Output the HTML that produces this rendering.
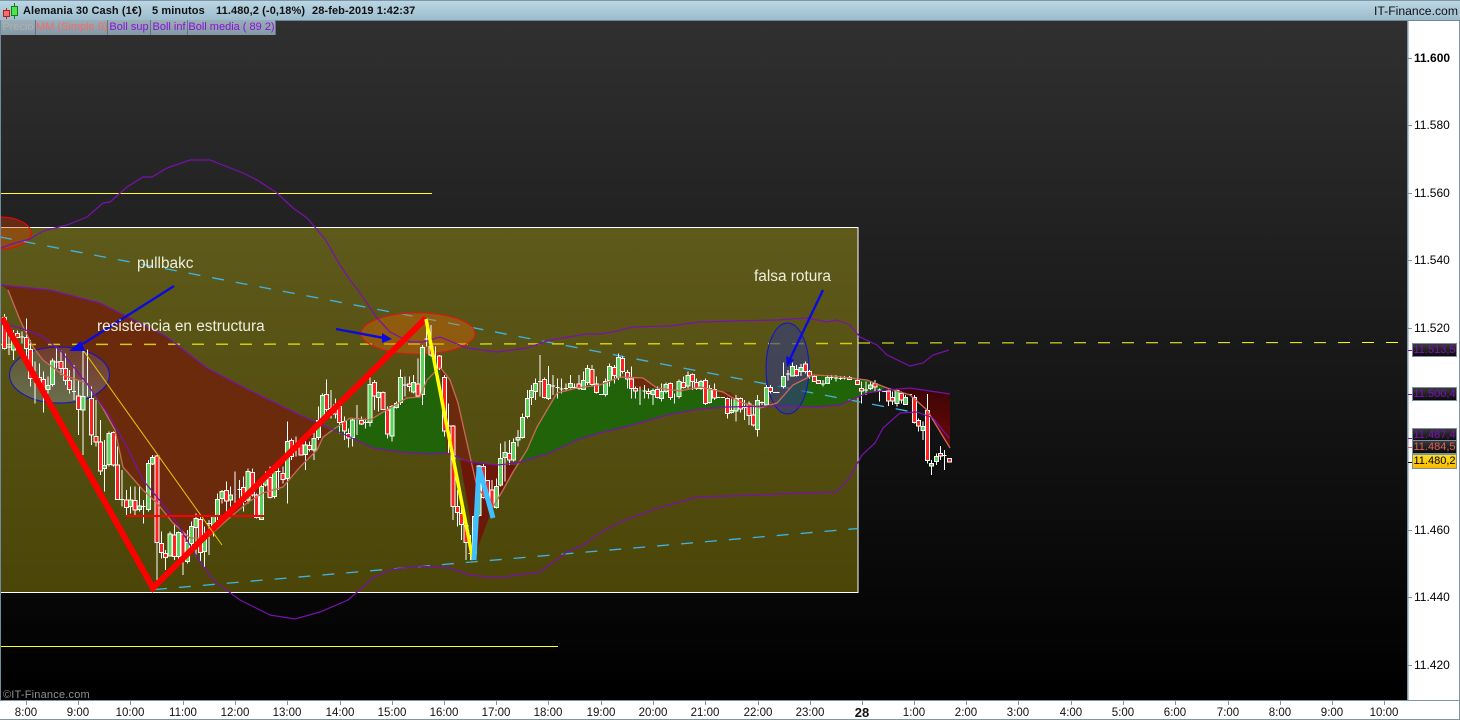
<!DOCTYPE html>
<html><head><meta charset="utf-8"><style>
html,body{margin:0;padding:0;background:#000}
#w{position:relative;width:1460px;height:720px;overflow:hidden;font-family:"Liberation Sans",sans-serif}
svg{position:absolute;left:0;top:0}
.h{position:absolute;top:4px;font-size:11px;font-weight:bold;color:#101010;line-height:14px;white-space:nowrap;letter-spacing:.1px}
.l{position:absolute;top:20px;height:15px;font-size:11px;line-height:15px;background:linear-gradient(#9aaeb9,#8499a5);text-align:center;white-space:nowrap;box-sizing:border-box;border-right:1px solid #5f7582}
.y{position:absolute;left:1414px;font-size:12px;color:#000;line-height:14px}
.x{position:absolute;top:706px;width:50px;text-align:center;font-size:11.5px;color:#111;line-height:14px}
.b{position:absolute;left:1412px;width:45px;height:14px;box-sizing:border-box;border:1px solid #7c919c;background:linear-gradient(#3a3a3a,#0a0a0a);font-size:11px;line-height:13px;text-align:center;color:#7a10c0;white-space:nowrap}
</style></head><body><div id="w">
<svg width="1460" height="720" viewBox="0 0 1460 720" xmlns="http://www.w3.org/2000/svg">
<defs>
<linearGradient id="bg" x1="0" y1="21" x2="0" y2="690" gradientUnits="userSpaceOnUse"><stop offset="0" stop-color="#303030"/><stop offset="1" stop-color="#000"/></linearGradient>
<linearGradient id="ol" x1="0" y1="227" x2="0" y2="592" gradientUnits="userSpaceOnUse"><stop offset="0" stop-color="#5e5a1b"/><stop offset="1" stop-color="#4b4508"/></linearGradient>
<linearGradient id="dr" x1="0" y1="388" x2="0" y2="450" gradientUnits="userSpaceOnUse"><stop offset="0" stop-color="#3a0505"/><stop offset="1" stop-color="#720808"/></linearGradient>
<linearGradient id="el" x1="0" y1="347" x2="0" y2="403" gradientUnits="userSpaceOnUse"><stop offset="0" stop-color="#7a6a7a" stop-opacity=".3"/><stop offset="1" stop-color="#8a9aa8" stop-opacity=".4"/></linearGradient>
</defs>
<rect x="0" y="20" width="1408" height="681" fill="url(#bg)"/>
<path d="M0 193.500H432" stroke="#ffff33" stroke-width="1"/>
<path d="M0 646.500H558" stroke="#ffff20" stroke-width="1"/>
<rect x="0" y="227.500" width="858" height="365" fill="url(#ol)" stroke="#fff" stroke-width="1"/>
<ellipse cx="0" cy="233" rx="31" ry="16" fill="#d23c00" fill-opacity=".38" stroke="#f00" stroke-width="1"/>

<path d="M1 285L50 290 100 303 120 313 167 337 207 368 243 387 300 415 330 430 323 437 317 450 300 468 283 487 263 493 247 503 227 520 207 538 190 538 173 523 157 503 143 490 123 467 115 430 100 403 87 383 63 375 43 360 33 347 20 320 8 290z" fill="#6b2a0b"/>
<path d="M330 430L337 427 350 418 370 420 390 408 407 398 420 397 427 350 440 367 448 423 447 453 427 454 400 452 373 448 350 437z" fill="#206308"/>
<path d="M440 367L450 380 458 403 467 443 471 462 447 453z" fill="#6b2a0b"/>
<path d="M460 460L497 465 517 465 513 472 503 490 493 507 476 552z" fill="#6d1708"/>
<path d="M513 472L527 450 537 427 557 393 577 388 600 385 620 377 630 378 635 390 657 388 680 391 700 387 723 392 740 402 760 408 777 403 793 385 813 375 833 376 867 380 887 388 867 393 840 405 817 407 790 406 767 406 727 407 700 409 667 415 633 425 600 433 577 440 550 453 517 463z" fill="#206308"/>
<path d="M630 378L643 378 657 388 635 390z M715 391L730 392 740 402 722 398z M233 498L250 500 240 510z" fill="#6b2a0b"/>
<path d="M887 388L910 388 950 394 950 448 927 410 910 395z" fill="url(#dr)"/>

<path d="M0 237L915 412.500" stroke="#3fb4e4" stroke-width="1.300" stroke-dasharray="12 12" fill="none"/>
<path d="M155 589.500L858 528.500" stroke="#3fb4e4" stroke-width="1.300" stroke-dasharray="12 12" fill="none"/>
<path d="M0 344.500L858 343.500" stroke="#d0cd10" stroke-width="1.500" stroke-dasharray="12 12" fill="none"/>
<path d="M858 343L1407 342.500" stroke="#ffff20" stroke-width="1" stroke-dasharray="12 12" fill="none"/>

<ellipse cx="59.500" cy="375" rx="50" ry="28" fill="url(#el)" stroke="#1010d0" stroke-width="1"/>
<ellipse cx="418" cy="333.500" rx="57" ry="20.500" fill="#ff6a00" fill-opacity=".33" stroke="#e81010" stroke-width="1"/>
<ellipse cx="787.500" cy="368.500" rx="21.500" ry="45.500" fill="#323c82" fill-opacity=".6" stroke="#1010d0" stroke-width="1"/>

<g fill="none" stroke="#fff" stroke-width="3" shape-rendering="crispEdges" transform="translate(0 290) scale(.33333)">
<path d="M14 72V178M27 125V195M40 120V210M53 122V142M66 125V160M79 85V225M92 150V290M105 215V340M118 220V290M131 245V368M144 260V310M157 205V290M170 175V235M183 180V255M196 190V285M209 240V310M222 225V330M235 270V435M249 180V495M262 178V320M275 290V465M288 330V470M301 390V555M314 450V605M327 425V530M340 425V530M353 470V630M366 540V650M379 600V680M392 590V670M405 590V680M418 590V665M431 630V700M445 510V665M458 495V525M471 495V880M484 725V805M497 780V840M510 725V800M523 700V810M536 725V830M549 725V855M562 720V820M575 695V790M588 670V800M601 680V815M614 710V832M627 690V795M640 680V740M653 610V690M666 600V640M679 575V670M692 590V650M705 545V640M718 570V625M731 560V665M744 535V640M757 535V620M770 610V685M784 580V690M797 545V590M810 530V625M823 540V625M836 525V600M849 530V580M862 395V640M875 445V510M888 440V500"/>
<path d="M21 171h12M60 141h12M164 216h12M216 305h12M360 628h12M425 650h12M621 700h12M712 598h12M830 545h12"/>
<path fill="#f22" d="M8 82h12v93h-12zM47 130h12v12h-12zM73 142h12v33h-12zM86 178h12v87h-12zM99 262h12v4h-12zM112 262h12v8h-12zM125 268h12v32h-12zM177 215h12v20h-12zM190 235h12v37h-12zM203 272h12v26h-12zM229 318h12v40h-12zM269 325h12v110h-12zM282 440h12v16h-12zM295 456h12v87h-12zM334 428h12v97h-12zM347 525h12v103h-12zM373 630h12v22h-12zM399 632h12v28h-12zM465 498h12v259h-12zM478 760h12v27h-12zM491 790h12v12h-12zM517 735h12v65h-12zM543 732h12v65h-12zM595 688h12v99h-12zM673 602h12v31h-12zM725 592h12v43h-12zM751 548h12v67h-12zM764 615h12v67h-12zM804 563h12v59h-12zM843 550h12v18h-12zM869 452h12v48h-12z"/>
<path fill="#5bd35b" d="M34 140h12v40h-12zM138 287h12v11h-12zM151 213h12v70h-12zM243 320h12v40h-12zM308 527h12v8h-12zM321 430h12v93h-12zM386 630h12v20h-12zM412 648h12v10h-12zM439 520h12v138h-12zM452 502h12v20h-12zM504 732h12v66h-12zM530 728h12v72h-12zM556 758h12v57h-12zM569 710h12v50h-12zM582 685h12v27h-12zM608 740h12v45h-12zM634 680h12v40h-12zM647 628h12v52h-12zM660 604h12v21h-12zM686 615h12v15h-12zM738 545h12v85h-12zM778 590h12v98h-12zM791 570h12v15h-12zM817 545h12v75h-12zM856 455h12v110h-12z"/>
</g>
<g fill="none" stroke="#fff" stroke-width="3" shape-rendering="crispEdges" transform="translate(300 290) scale(.33333)">
<path d="M16 440V540M29 455V485M42 420V510M55 350V450M68 310V395M80 268V365M93 300V385M106 325V385M119 345V430M133 380V450M146 415V472M158 385V470M171 345V435M184 380V405M197 385V415M210 255V410M223 270V360M236 305V365M249 305V360M262 350V445M276 345V455M289 335V355M301 238V345M315 260V320M328 260V305M341 255V310M354 205V320M367 165V345M380 90V170M393 105V200M406 170V230M419 195V240M433 255V440M446 340V490M459 405V690M472 600V710M485 640V750M498 690V810M511 735V810M524 680V795M537 525V680M550 520V625M563 570V640M576 570V655M589 565V655M602 460V590M615 455V575M628 450V525M641 445V515M654 420V470M667 370V445M682 300V385M695 285V345M707 265V330M720 195V320M733 262V325M746 228V330M759 255V315M772 265V325M785 265V310M798 280V305M811 255V295M824 280V295M837 255V300M850 245V300M863 225V285M876 225V290M889 260V310"/>
<path d="M87 355h12M165 385h12M191 397h12M309 285h12M374 147h12M440 408h12M505 790h12M714 275h12M753 288h12M766 292h12M779 297h12M792 296h12M818 292h12"/>
<path fill="#f22" d="M-3 465h12v30h-12zM23 467h12v11h-12zM74 313h12v45h-12zM100 345h12v27h-12zM113 350h12v48h-12zM127 395h12v28h-12zM140 430h12v14h-12zM178 392h12v10h-12zM217 278h12v40h-12zM243 308h12v50h-12zM256 360h12v72h-12zM322 282h12v8h-12zM348 282h12v36h-12zM387 170h12v25h-12zM413 198h12v37h-12zM427 262h12v161h-12zM453 408h12v242h-12zM466 650h12v17h-12zM479 670h12v33h-12zM492 707h12v50h-12zM544 530h12v92h-12zM557 572h12v53h-12zM570 600h12v50h-12zM622 490h12v20h-12zM727 268h12v54h-12zM831 282h12v13h-12zM870 238h12v46h-12zM883 282h12v25h-12z"/>
<path fill="#5bd35b" d="M10 465h12v28h-12zM36 445h12v35h-12zM49 392h12v51h-12zM62 316h12v74h-12zM152 390h12v52h-12zM204 283h12v115h-12zM230 308h12v14h-12zM270 350h12v88h-12zM283 340h12v12h-12zM295 262h12v76h-12zM335 278h12v28h-12zM361 172h12v141h-12zM518 680h12v110h-12zM531 528h12v148h-12zM583 590h12v62h-12zM596 505h12v80h-12zM609 488h12v14h-12zM635 458h12v52h-12zM648 443h12v7h-12zM661 382h12v60h-12zM676 326h12v54h-12zM689 302h12v20h-12zM701 280h12v24h-12zM740 284h12v41h-12zM805 280h12v12h-12zM844 272h12v26h-12zM857 235h12v43h-12z"/>
</g>
<g fill="none" stroke="#fff" stroke-width="3" shape-rendering="crispEdges" transform="translate(600 290) scale(.33333)">
<path d="M16 265V320M29 220V290M43 225V280M56 190V270M68 200V250M82 240V295M94 230V325M107 290V325M120 290V345M133 285V325M146 295V325M159 295V345M172 290V325M185 280V335M198 278V310M211 278V330M224 310V340M237 268V325M250 260V295M264 245V295M277 250V300M290 265V300M303 270V300M316 265V345M329 285V340M343 280V330M382 322V385M395 325V370M408 315V395M421 322V368M434 330V390M447 335V405M460 345V410M473 315V440M486 335V345M499 285V350M512 285V310M551 218V295M564 240V272M577 218V260M590 225V260M603 222V258M616 215V250M629 240V265M643 255V276M656 270V282M669 270V290M682 255V282M695 255V270M708 255V275M721 258V270M734 258V268M748 258V270M772 268V285M785 275V340M798 275V315M811 275V300M825 270V305M838 295V335M865 295V348M878 305V345M891 295V350M904 305V340M917 315V345M943 315V400M956 385V425M969 395V450M982 312V520M995 510V555M1009 490V525M1021 468V510M1034 480V540"/>
<path d="M-3 314h12M127 303h12M350 322h12M363 323h12M428 352h12M480 338h12M519 307h20M558 252h12M663 282h12M689 262h12M702 264h12M715 266h12M728 264h12M792 300h12M832 300h12M846 304h12M924 314h12M1028 497h12"/>
<path fill="#f22" d="M37 233h12v24h-12zM62 206h12v39h-12zM76 248h12v19h-12zM88 267h12v28h-12zM101 296h12v7h-12zM140 305h12v5h-12zM166 298h12v24h-12zM205 281h12v41h-12zM244 278h12v14h-12zM271 253h12v22h-12zM284 278h12v17h-12zM310 272h12v68h-12zM337 298h12v26h-12zM376 326h12v44h-12zM415 325h12v32h-12zM441 342h12v34h-12zM454 375h12v30h-12zM506 293h12v12h-12zM584 239h12v17h-12zM610 222h12v22h-12zM623 245h12v13h-12zM637 260h12v14h-12zM650 272h12v8h-12zM742 263h12v5h-12zM766 272h12v11h-12zM779 296h12v7h-12zM819 281h12v10h-12zM859 303h12v30h-12zM872 322h12v11h-12zM898 310h12v20h-12zM937 323h12v74h-12zM950 392h12v16h-12zM976 362h12v149h-12zM1015 491h12v7h-12zM1042 506h12v10h-12z"/>
<path fill="#5bd35b" d="M10 275h12v38h-12zM23 230h12v42h-12zM50 203h12v59h-12zM153 302h12v12h-12zM179 305h12v20h-12zM192 284h12v21h-12zM231 275h12v45h-12zM258 256h12v32h-12zM297 275h12v20h-12zM323 295h12v42h-12zM389 362h12v5h-12zM402 325h12v38h-12zM467 332h12v86h-12zM493 292h12v53h-12zM545 260h12v30h-12zM571 230h12v28h-12zM597 233h12v12h-12zM676 263h12v17h-12zM805 285h12v10h-12zM885 302h12v38h-12zM911 323h12v20h-12zM963 410h12v11h-12zM989 520h12v8h-12zM1003 500h12v14h-12z"/>
</g>

<path fill="none" stroke="#c96a58" stroke-width="1.300" d="M8 290L20 320 33 347 43 360 63 375 87 383 100 403 115 430 123 467 143 490 157 503 173 523 190 538 207 538 227 520 247 503 263 493 283 487 300 467 317 450 323 437 337 427 350 418 370 420 390 408 407 398 420 397 427 380 440 367 450 380 458 403 467 443 477 487 493 507 503 490 513 472 527 450 537 427 557 393 577 388 600 385 620 377 643 378 657 388 680 391 700 387 723 392 740 402 760 408 777 403 793 385 813 375 833 376 867 380 887 388 910 395 927 410 950 448"/>
<path fill="none" stroke="#7a10ae" stroke-width="1.200" d="M1 285L50 290 100 303 120 313 167 337 207 368 243 387 300 415 327 427 350 437 373 448 400 452 427 454 447 453 470 462 497 465 517 463 550 453 577 440 600 433 633 425 667 415 700 409 727 407 767 406 790 406 817 407 840 405 867 393 887 390 910 388 950 394"/>
<path fill="none" stroke="#7a10ae" stroke-width="1.200" d="M1 248L15 243 30 239 43 231 67 225 87 217 103 203 110 202 127 187 143 177 152 177 167 168 190 160 210 160 243 173 257 180 277 193 293 208 307 218 325 239 340 265 350 280 358 290 377 318 390 332 410 342 423 342 440 337 467 348 497 352 527 348 550 340 587 334 600 334 613 332 633 327 670 326 700 322 733 321 777 320 807 318 827 322 837 320 850 325 860 337 877 345 887 355 910 366 923 363 933 355 949 350"/>
<path fill="none" stroke="#7a10ae" stroke-width="1.200" d="M1 323L20 328 40 335 60 350 88 385 110 417 127 447 143 480 157 497 177 523 197 557 213 580 240 600 270 615 295 619 320 612 348 600 373 578 390 570 417 566 450 568 470 575 497 578 517 575 540 572 567 552 583 545 600 533 620 522 655 509 697 497 727 496 760 495 800 493 837 492 850 477 862 455 875 443 883 428 900 413 917 412 933 418 949 438"/>

<path d="M2 318L153 588 426 318" fill="none" stroke="#f00" stroke-width="6" stroke-linejoin="miter"/>
<path d="M83 350L222 545" stroke="#e8c800" stroke-width="1" fill="none"/>
<path d="M126 516H264" stroke="#f00" stroke-width="2" fill="none"/>
<path d="M426 319L473 560" stroke="#ff0" stroke-width="3.500" fill="none"/>
<path d="M474 560L479 467 493 518" fill="none" stroke="#40c0ff" stroke-width="5"/>

<path d="M174 286L78 347" stroke="#0a0ae0" stroke-width="2.400" fill="none"/><path d="M69 351L81 341 85 351z" fill="#0a0ae0"/>
<path d="M336 329L384 338" stroke="#0a0ae0" stroke-width="2.400" fill="none"/><path d="M392 339L382 333 382 343z" fill="#0a0ae0"/>
<path d="M823 290L790 359" stroke="#0a0ae0" stroke-width="2.400" fill="none"/><path d="M787 367L786 356 794 360z" fill="#0a0ae0"/>

<text x="137" y="268" font-family="Liberation Sans" font-size="15.400" fill="#eeeedd">pullbakc</text>
<text x="97" y="331" font-family="Liberation Sans" font-size="15.400" fill="#eeeedd">resistencia en estructura</text>
<text x="754" y="281" font-family="Liberation Sans" font-size="15.400" fill="#eeeedd">falsa rotura</text>
<text x="3" y="698" font-family="Liberation Sans" font-size="11" fill="#8f8f8f" letter-spacing=".2">©IT-Finance.com</text>

<rect x="1407" y="20" width="53" height="681" fill="#fff"/>
<rect x="0" y="700" width="1460" height="20" fill="#fff"/>
<rect x="0" y="20" width="1" height="680" fill="#6f8b9d"/>
<rect x="1407" y="20" width="1.500" height="680" fill="#7f97a5"/>
<rect x="0" y="700" width="1460" height="1" fill="#7f97a5"/>
<rect x="0" y="719" width="1460" height="1" fill="#7f97a5"/>
<rect x="1459" y="20" width="1" height="700" fill="#7f97a5"/>
<path d="M1408 58.500h4M1408 125.500h4M1408 193.500h4M1408 260.500h4M1408 328.500h4M1408 530.500h4M1408 597.500h4M1408 665.500h4" stroke="#7f97a5"/>
<path d="M26.500 701v4M78.500 701v4M130.500 701v4M183.500 701v4M235.500 701v4M287.500 701v4M340.500 701v4M392.500 701v4M444.500 701v4M496.500 701v4M548.500 701v4M601.500 701v4M653.500 701v4M705.500 701v4M758.500 701v4M810.500 701v4M862.500 701v4M914.500 701v4M966.500 701v4M1018.500 701v4M1071.500 701v4M1123.500 701v4M1175.500 701v4M1228.500 701v4M1280.500 701v4M1332.500 701v4M1384.500 701v4" stroke="#7f97a5"/>
<path d="M1408 350.500h4M1408 394.500h4M1408 438.500h4" stroke="#7a10c0"/><path d="M1408 447.500h4" stroke="#d06a6a"/><path d="M1408 462.500h4" stroke="#000"/>

<defs><linearGradient id="hd" x1="0" y1="0" x2="0" y2="20" gradientUnits="userSpaceOnUse"><stop offset="0" stop-color="#bcd8e6"/><stop offset="1" stop-color="#9cbbcc"/></linearGradient></defs>
<rect x="0" y="0" width="1460" height="20" fill="url(#hd)"/>
<rect x="0" y="0" width="1460" height="1" fill="#7f97a5"/>
<rect x="0" y="20" width="1460" height="1" fill="#6d8797"/>
<g shape-rendering="crispEdges">
<path d="M6.500 8v11" stroke="#c02020"/><rect x="3.500" y="10.500" width="6" height="6" fill="#f07070" stroke="#b02020"/>
<path d="M14.500 3v16" stroke="#108010"/><rect x="11.500" y="6.500" width="6" height="9" fill="#50e050" stroke="#108010"/>
</g>
</svg>

<div class="h" style="left:23px">Alemania 30 Cash (1€)</div>
<div class="h" style="left:152px">5 minutos</div>
<div class="h" style="left:216px">11.480,2 (-0,18%)</div>
<div class="h" style="left:312px">28-feb-2019 1:42:37</div>
<div class="h" style="left:1374px;font-weight:normal;font-size:12.200px;letter-spacing:0">IT-Finance.com</div>

<div class="l" style="left:1px;width:35px;color:#b0b0b0">Precio</div>
<div class="l" style="left:36px;width:72px;color:#f46a6a">MM (Simple 9)</div>
<div class="l" style="left:108px;width:43px;color:#8a10d8">Boll sup</div>
<div class="l" style="left:151px;width:37px;color:#8a10d8">Boll inf</div>
<div class="l" style="left:188px;width:88px;color:#8a10d8">Boll media ( 89 2)</div>

<div class="y" style="top:51px;font-weight:bold">11.600</div>
<div class="y" style="top:118px">11.580</div>
<div class="y" style="top:186px">11.560</div>
<div class="y" style="top:253px">11.540</div>
<div class="y" style="top:321px">11.520</div>
<div class="y" style="top:523px">11.460</div>
<div class="y" style="top:590px">11.440</div>
<div class="y" style="top:658px">11.420</div>

<div class="b" style="top:343px">11.513,5</div>
<div class="b" style="top:387px">11.500,4</div>
<div class="b" style="top:428px">11.487,4</div>
<div class="b" style="top:440px;color:#e06060">11.484,5</div>
<div class="b" style="top:454px;height:15px;color:#000;background:linear-gradient(#ffe020,#f8b800)">11.480,2</div>

<div class="x" style="left:1px">8:00</div><div class="x" style="left:53px">9:00</div><div class="x" style="left:105px">10:00</div><div class="x" style="left:158px">11:00</div><div class="x" style="left:210px">12:00</div><div class="x" style="left:262px">13:00</div><div class="x" style="left:315px">14:00</div><div class="x" style="left:367px">15:00</div><div class="x" style="left:419px">16:00</div><div class="x" style="left:471px">17:00</div><div class="x" style="left:523px">18:00</div><div class="x" style="left:576px">19:00</div><div class="x" style="left:628px">20:00</div><div class="x" style="left:680px">21:00</div><div class="x" style="left:733px">22:00</div><div class="x" style="left:785px">23:00</div><div class="x" style="left:837px;font-weight:bold;font-size:13px">28</div><div class="x" style="left:889px">1:00</div><div class="x" style="left:941px">2:00</div><div class="x" style="left:993px">3:00</div><div class="x" style="left:1046px">4:00</div><div class="x" style="left:1098px">5:00</div><div class="x" style="left:1150px">6:00</div><div class="x" style="left:1203px">7:00</div><div class="x" style="left:1255px">8:00</div><div class="x" style="left:1307px">9:00</div><div class="x" style="left:1359px">10:00</div>
</div></body></html>
